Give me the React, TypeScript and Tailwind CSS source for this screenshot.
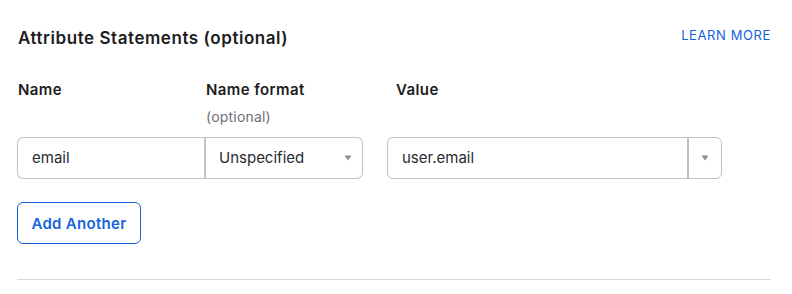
const Caret = () => (
  <svg width="8" height="6" viewBox="0 0 8 6" className="shrink-0">
    <path d="M0.5 0.5 L7.5 0.5 L4 5.5 Z" fill="#8c8c96" />
  </svg>
)

const App = () => {
  return (
    <div className="w-[792px] h-[294px] bg-white text-[#1d1d21] pl-[17px] pr-[21px] pt-[27px] font-['Inter',sans-serif]">
      <div className="flex justify-between items-start">
        <h2 className="pl-px text-[17px] leading-[22px] font-semibold tracking-[0.55px]">
          Attribute Statements (optional)
        </h2>
        <a href="#" className="text-[13px] leading-[16px] text-[#1662dd] tracking-[0.6px]">
          LEARN MORE
        </a>
      </div>

      <div className="mt-[31px] flex items-start">
        <div className="w-[187px]">
          <div className="pl-px text-[15px] leading-[20px] font-semibold tracking-[0.4px]">Name</div>
          <div className="mt-[37px] h-[42px] border border-[#c1c1c8] border-r-0 rounded-l-md flex items-center px-[14px] text-[15px] text-[#2a2a30]">
            email
          </div>
        </div>
        <div className="w-[159px]">
          <div className="pl-[2px] text-[15px] leading-[20px] font-semibold tracking-[0.4px]">Name format</div>
          <div className="pl-[2px] mt-[7px] text-[14px] leading-[20px] text-[#6e6e78] tracking-[0.2px]">(optional)</div>
          <div className="mt-[10px] h-[42px] border border-[#c1c1c8] border-l-2 rounded-r-md flex items-center justify-between pl-[13px] pr-[10px] text-[15px] text-[#2a2a30]">
            <span>Unspecified</span>
            <Caret />
          </div>
        </div>
        <div className="ml-[24px] w-[335px]">
          <div className="pl-[9px] text-[15px] leading-[20px] font-semibold tracking-[0.4px]">Value</div>
          <div className="mt-[37px] h-[42px] border border-[#c1c1c8] rounded-md flex items-stretch text-[15px] text-[#2a2a30]">
            <div className="flex-1 flex items-center px-[14px]">user.email</div>
            <div className="w-[34px] border-l-2 border-[#c1c1c8] flex items-center justify-center">
              <Caret />
            </div>
          </div>
        </div>
      </div>

      <button className="mt-[23px] w-[124px] h-[42px] border border-[#1662dd] rounded-md text-[#1662dd] text-[15px] leading-[20px] font-semibold tracking-[0.3px] pt-px">
        Add Another
      </button>

      <div className="mt-[35px] h-px bg-[#d7d7dc]" />
    </div>
  )
}

export default App
